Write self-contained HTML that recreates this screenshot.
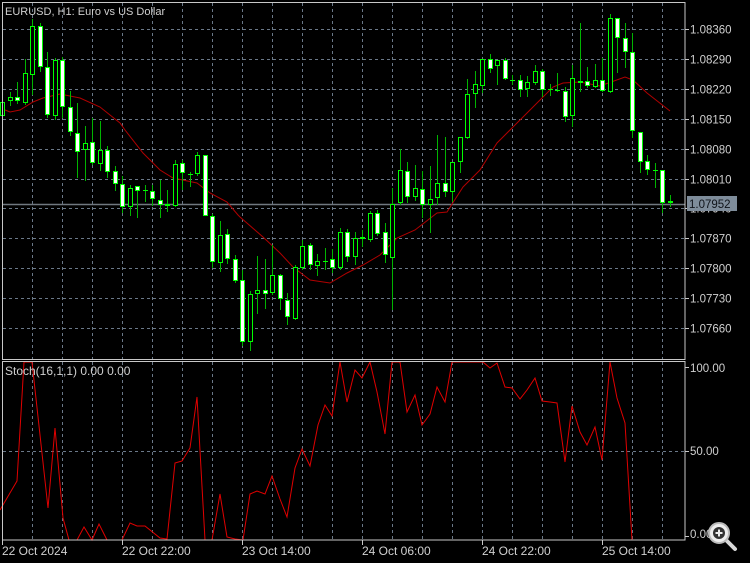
<!DOCTYPE html>
<html><head><meta charset="utf-8"><style>
html,body{margin:0;padding:0;background:#000;width:750px;height:563px;overflow:hidden}
svg{display:block}
text{font-family:"Liberation Sans",sans-serif;font-size:11px;fill:#d0d0d0}
text.b{font-size:12px}
#labels text{font-size:11.5px}
</style></head><body>
<svg id="s" width="750" height="563" xmlns="http://www.w3.org/2000/svg">
<g id="grid" stroke="#6a7888" stroke-width="1" stroke-dasharray="3,3"></g>
<line x1="2" y1="204.5" x2="685" y2="204.5" stroke="#707880" stroke-width="1.5"/>
<polyline fill="none" stroke="#b00000" stroke-width="1" points="0,108 10,112 20,110 33,102 43,98 60,94 80,98 100,107 120,123 125,130 143,153 160,170 173,178 197,183 210,193 227,202 238,215 240,217 263,237 280,253 293,267 310,280 330,283 347,273 363,265 380,255 397,238 415,230 437,213 447,212 463,187 480,170 497,143 513,127 530,110 553,87 563,83 580,82 600,86 625,77 633,80 647,93 670,111"/>
<g id="candles"></g>
<polyline fill="none" stroke="#e00000" stroke-width="1" points="0,510 17,481 24,362 32,362 48,508 55,428 63,518 69,540 77,540 84,527 92,540 99,524 107,540 122,540 130,523 137,526 145,526 160,538 167,539 175,463 182,461 190,448 197,397 205,540 212,540 220,494 227,537 235,539 243,540 250,494 257,491 265,494 272,476 280,499 287,517 295,468 302,449 310,466 318,425 325,405 332,416 340,362 347,402 355,370 362,378 370,362 377,392 385,434 392,362 400,362 407,412 415,395 422,425 430,414 437,387 445,402 452,362 483,362 490,368 497,363 505,387 512,388 520,399 527,390 535,378 542,401 550,402 557,403 565,462 572,406 580,432 587,445 595,427 602,460 610,362 617,398 625,423 632,540"/>
<g stroke="#c8c8c8" stroke-width="1" fill="none">
<rect x="2.5" y="2.5" width="682.5" height="357"/>
<rect x="2.5" y="361.5" width="682.5" height="178.5"/>
</g>
<g id="ticks" stroke="#c8c8c8" stroke-width="1"></g>
<g id="labels"></g>
<rect x="687" y="196" width="50" height="15" fill="#7e8c9a"/>
<text x="689" y="208" style="fill:#10141a;font-size:11.5px">1.07952</text>
<text x="5" y="15">EURUSD, H1:  Euro vs US Dollar</text>
<text class="b" x="5" y="375">Stoch(16,1,1) 0.00 0.00</text>
<g id="labels2">
<text x="690" y="372" style="font-size:11.5px">100.00</text>
<text x="690" y="455" style="font-size:11.5px">50.00</text>
<text x="690" y="538" style="font-size:11.5px">0.00</text>
</g>
<text class="b" x="2" y="555">22 Oct 2024</text>
<text class="b" x="122" y="555">22 Oct 22:00</text>
<text class="b" x="242" y="555">23 Oct 14:00</text>
<text class="b" x="362" y="555">24 Oct 06:00</text>
<text class="b" x="482" y="555">24 Oct 22:00</text>
<text class="b" x="602" y="555">25 Oct 14:00</text>
<g>
<line x1="725" y1="539" x2="735" y2="549" stroke="#d8d8d8" stroke-width="4" stroke-linecap="round"/>
<circle cx="719" cy="533" r="10" fill="#eee" stroke="#bbb" stroke-width="2"/>
<circle cx="719" cy="533" r="6" fill="#333"/>
<path d="M715.5 533H722.5M719 529.5V536.5" stroke="#eee" stroke-width="2"/>
</g>
</svg>
<script>
var ns="http://www.w3.org/2000/svg";
function el(p,t,a){var e=document.createElementNS(ns,t);for(var k in a)e.setAttribute(k,a[k]);p.appendChild(e);return e;}
var g=document.getElementById('grid');
for(var x=32;x<685;x+=30){el(g,'line',{x1:x+.5,y1:3,x2:x+.5,y2:359});el(g,'line',{x1:x+.5,y1:362,x2:x+.5,y2:540});}
var prices=["1.08360","1.08290","1.08220","1.08150","1.08080","1.08010","1.07940","1.07870","1.07800","1.07730","1.07660"];
var lb=document.getElementById('labels'),tk=document.getElementById('ticks');
for(var k=0;k<11;k++){var y=Math.round(29+29.9*k)+.5;el(g,'line',{x1:3,y1:y,x2:685,y2:y});el(tk,'line',{x1:685,y1:y,x2:689,y2:y});
 var t=el(lb,'text',{x:690,y:y+4});t.textContent=prices[k];}
el(g,'line',{x1:3,y1:451.5,x2:685,y2:451.5});
[367.5,451.5,536.5].forEach(function(y){el(tk,'line',{x1:685,y1:y,x2:689,y2:y});});
[2,122,242,362,482,602].forEach(function(x){el(tk,'line',{x1:x+.5,y1:540,x2:x+.5,y2:545});});
var d=[[102,116,100,118,0],[97,101,92,106,0],[97,101,82,104,1],[73,103,59,105,0],[26,75,19,95,0],[26,67,23,72,1],[67,115,52,118,1],[60,116,58,120,0],[60,107,57,118,1],[107,132,91,136,1],[133,152,103,178,1],[143,150,126,181,0],[142,163,118,165,1],[150,164,121,171,0],[150,172,146,178,1],[171,184,166,191,1],[184,207,176,213,1],[188,207,185,216,0],[186,191,186,218,1],[190,191,185,202,0],[191,199,185,206,1],[200,205,180,218,1],[204,206,190,212,0],[164,206,160,207,0],[163,173,160,190,1],[174,175,172,187,0],[155,174,152,176,0],[155,216,155,216,1],[216,262,214,268,1],[235,263,221,272,0],[234,259,229,264,1],[259,281,255,283,1],[280,342,270,346,1],[294,342,291,351,0],[290,294,256,314,0],[290,294,259,309,1],[275,293,245,295,0],[275,299,274,310,1],[300,317,293,325,1],[267,319,265,320,0],[246,268,240,270,0],[245,265,243,270,1],[261,266,254,276,0],[261,262,248,270,0],[259,268,249,273,1],[232,268,228,270,0],[232,257,229,262,1],[238,257,232,265,0],[237,239,230,247,1],[213,240,211,242,0],[213,234,210,236,1],[232,255,223,263,1],[204,258,188,310,0],[170,203,149,205,0],[171,197,162,203,1],[188,197,165,201,0],[189,205,171,218,1],[199,205,166,233,0],[183,198,135,205,0],[183,192,137,197,1],[162,192,162,202,0],[137,162,137,173,0],[94,138,79,139,0],[84,94,71,108,0],[59,86,59,93,0],[59,69,54,73,1],[60,66,60,85,0],[60,79,58,80,1],[80,81,75,85,0],[80,90,75,97,1],[82,89,76,97,0],[71,83,65,85,0],[71,90,69,97,1],[89,90,84,96,0],[90,91,73,92,0],[91,117,87,122,1],[78,116,65,127,0],[81,83,23,92,0],[81,86,67,88,1],[80,87,64,88,0],[80,91,58,92,1],[18,92,14,93,0],[18,38,18,73,1],[38,52,23,68,1],[52,131,33,138,1],[132,162,132,173,1],[161,170,155,175,1],[170,171,163,188,0],[170,203,170,213,1],[201,203,195,207,1]];
var c=document.getElementById('candles');
d.forEach(function(v,i){var cx=Math.round(2+7.5*i);
 el(c,'line',{x1:cx+.5,y1:v[2],x2:cx+.5,y2:v[3],stroke:'#00b400','stroke-width':1});
 var h=v[1]-v[0];
 if(h<=1){el(c,'line',{x1:cx-2,y1:v[0]+.5,x2:cx+3,y2:v[0]+.5,stroke:'#00ff00','stroke-width':1});}
 else el(c,'rect',{x:cx-1.5,y:v[0]+.5,width:4,height:h-1,fill:v[4]?'#ffffff':'#000',stroke:'#00ff00','stroke-width':1});
});
</script>
</body></html>
